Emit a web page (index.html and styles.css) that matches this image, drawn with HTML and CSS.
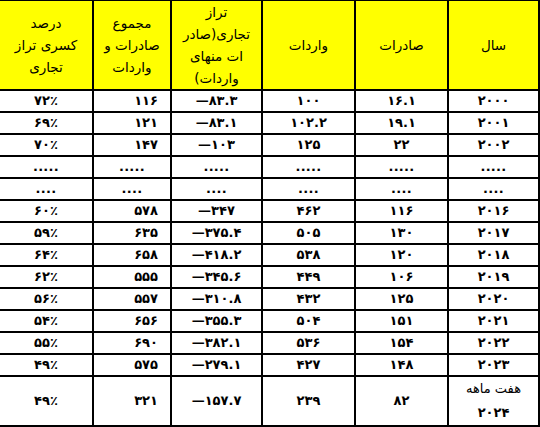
FILE: index.html
```html
<!DOCTYPE html>
<html lang="fa" dir="rtl">
<head>
<meta charset="utf-8">
<link rel="stylesheet" href="styles.css">
</head>
<body>
<table class="trade">
<colgroup>
<col class="w-year"><col class="w-exp"><col class="w-imp"><col class="w-bal"><col class="w-sum"><col class="w-pct">
</colgroup>
<thead>
<tr>
<th>سال</th>
<th>صادرات</th>
<th>واردات</th>
<th>تراز<br>تجاری(صادر<br>ات منهای<br>واردات)</th>
<th>مجموع<br>صادرات و<br>واردات</th>
<th>درصد<br>کسری تراز<br>تجاری</th>
</tr>
</thead>
<tbody>
<tr><td>۲۰۰۰</td><td>۱۶.۱</td><td>۱۰۰</td><td><span class="neg" dir="ltr">—۸۳.۳</span></td><td class="sum">۱۱۶</td><td>۷۲٪</td></tr>
<tr><td>۲۰۰۱</td><td>۱۹.۱</td><td>۱۰۲.۲</td><td><span class="neg" dir="ltr">—۸۳.۱</span></td><td class="sum">۱۲۱</td><td>۶۹٪</td></tr>
<tr><td>۲۰۰۲</td><td>۲۲</td><td>۱۲۵</td><td><span class="neg" dir="ltr">—۱۰۳</span></td><td class="sum">۱۴۷</td><td>۷۰٪</td></tr>
<tr class="dots"><td>.....</td><td>.....</td><td>.....</td><td>.....</td><td class="mid">.....</td><td>.....</td></tr>
<tr class="dots"><td>....</td><td>....</td><td>....</td><td>....</td><td class="mid">....</td><td>....</td></tr>
<tr><td>۲۰۱۶</td><td>۱۱۶</td><td>۴۶۲</td><td><span class="neg" dir="ltr">—۳۴۷</span></td><td class="sum">۵۷۸</td><td>۶۰٪</td></tr>
<tr><td>۲۰۱۷</td><td>۱۳۰</td><td>۵۰۵</td><td><span class="neg" dir="ltr">—۳۷۵.۴</span></td><td class="sum">۶۳۵</td><td>۵۹٪</td></tr>
<tr><td>۲۰۱۸</td><td>۱۲۰</td><td>۵۳۸</td><td><span class="neg" dir="ltr">—۴۱۸.۲</span></td><td class="sum">۶۵۸</td><td>۶۴٪</td></tr>
<tr><td>۲۰۱۹</td><td>۱۰۶</td><td>۴۴۹</td><td><span class="neg" dir="ltr">—۳۴۵.۶</span></td><td class="sum">۵۵۵</td><td>۶۲٪</td></tr>
<tr><td>۲۰۲۰</td><td>۱۲۵</td><td>۴۳۲</td><td><span class="neg" dir="ltr">—۳۱۰.۸</span></td><td class="sum">۵۵۷</td><td>۵۶٪</td></tr>
<tr><td>۲۰۲۱</td><td>۱۵۱</td><td>۵۰۴</td><td><span class="neg" dir="ltr">—۳۵۵.۳</span></td><td class="sum">۶۵۶</td><td>۵۴٪</td></tr>
<tr><td>۲۰۲۲</td><td>۱۵۴</td><td>۵۳۶</td><td><span class="neg" dir="ltr">—۳۸۲.۱</span></td><td class="sum">۶۹۰</td><td>۵۵٪</td></tr>
<tr><td>۲۰۲۳</td><td>۱۴۸</td><td>۴۲۷</td><td><span class="neg" dir="ltr">—۲۷۹.۱</span></td><td class="sum">۵۷۵</td><td>۴۹٪</td></tr>
<tr class="last"><td><span class="lbl">هفت ماهه</span><br>۲۰۲۴</td><td>۸۲</td><td>۲۳۹</td><td><span class="neg" dir="ltr">—۱۵۷.۷</span></td><td class="sum">۳۲۱</td><td>۴۹٪</td></tr>
</tbody>
</table>
</body>
</html>
```
FILE: styles.css
```css
html, body {
  margin: 0;
  padding: 0;
  background: #fff;
}

.trade {
  direction: rtl;
  border-collapse: collapse;
  table-layout: fixed;
  width: 540px;
  margin: -1px 0 0 -2px;
  font-family: "DejaVu Sans", sans-serif;
  color: #000;
}

.w-year { width: 91px; }
.w-exp { width: 93px; }
.w-imp { width: 93px; }
.w-bal { width: 91px; }
.w-sum { width: 78px; }
.w-pct { width: 94px; }

.trade th,
.trade td {
  border: 2px solid #000;
  padding: 0 2px;
  text-align: center;
  vertical-align: middle;
}

.trade th {
  background: #ffff00;
  font-weight: normal;
  font-size: 13.5px;
  line-height: 22px;
  height: 88px;
}

.trade td {
  font-weight: bold;
  font-size: 13px;
  letter-spacing: 0.6px;
  line-height: 16px;
  height: 20px;
}

.trade td.sum {
  text-align: right;
  padding-right: 12px;
}

.trade tr.dots td {
  letter-spacing: 0.3px;
}

.trade tr.dots td.mid {
  text-align: center;
}

.trade .neg {
  letter-spacing: 0.6px;
}

.trade tr.last td {
  height: 45px;
  line-height: 24px;
}

.trade .lbl {
  font-weight: normal;
  font-size: 13px;
  letter-spacing: 0;
}
```
